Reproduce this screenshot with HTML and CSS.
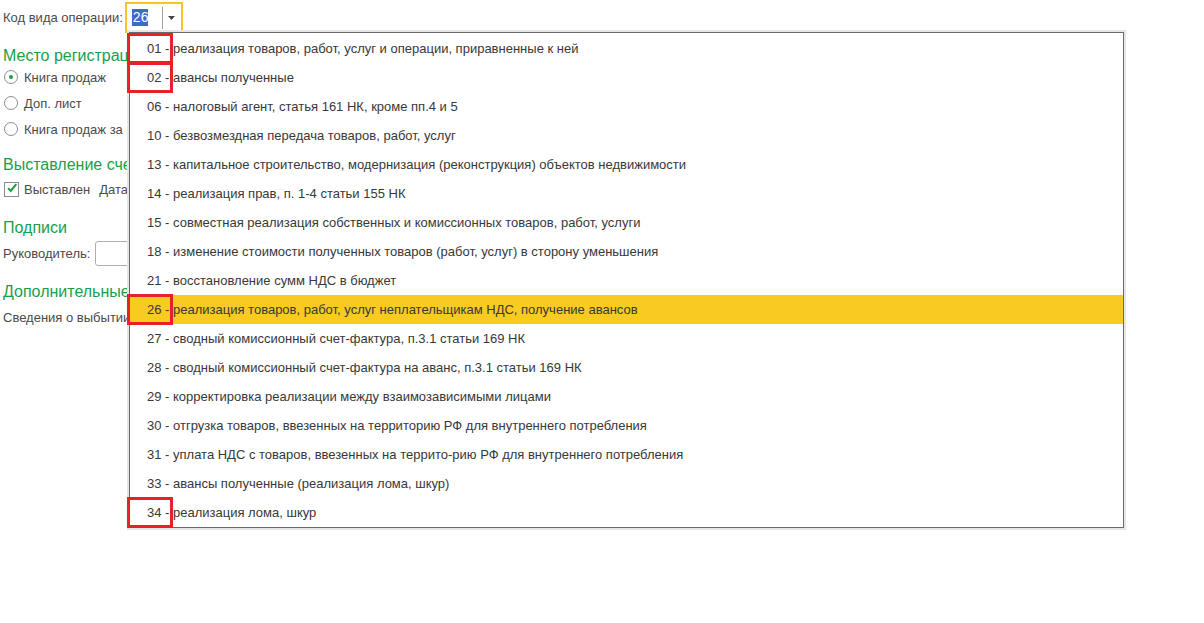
FILE: index.html
```html
<!DOCTYPE html>
<html lang="ru">
<head>
<meta charset="utf-8">
<title>Счет-фактура выданный</title>
<link rel="stylesheet" href="styles.css">
</head>
<body>
<div class="form">
  <div class="row-top">
    <span class="label">Код вида операции:</span>
    <div class="combo">
      <span class="combo-value"><span class="sel">26</span></span>
      <span class="combo-sep"></span>
      <span class="combo-btn"><svg width="7" height="4" viewBox="0 0 7 4"><path d="M0 0h7L3.5 4z" fill="#444"/></svg></span>
    </div>
  </div>

  <div class="group-title">Место регистрации</div>
  <div class="line"><span class="radio on"></span><span>Книга продаж</span></div>
  <div class="line"><span class="radio"></span><span>Доп. лист</span></div>
  <div class="line"><span class="radio"></span><span>Книга продаж за истекший налоговый период</span></div>

  <div class="group-title gt2">Выставление счета-фактуры</div>
  <div class="line line-check">
    <span class="check"><svg width="14" height="14" viewBox="0 0 14 14"><path d="M2.5 7.2l3 3.3 6.5-8" fill="none" stroke="#1d9b45" stroke-width="2.4"/></svg></span>
    <span>Выставлен</span><span class="gap">Дата выставления:</span>
  </div>

  <div class="group-title gt3">Подписи</div>
  <div class="line line-input"><span>Руководитель:</span><span class="input"></span></div>

  <div class="group-title gt3">Дополнительные сведения</div>
  <div class="line line-last"><span>Сведения о выбытии</span></div>
</div>

<div class="popup">
  <div class="item"><span class="mark"></span>01 - реализация товаров, работ, услуг и операции, приравненные к ней</div>
  <div class="item"><span class="mark"></span>02 - авансы полученные</div>
  <div class="item">06 - налоговый агент, статья 161 НК, кроме пп.4 и 5</div>
  <div class="item">10 - безвозмездная передача товаров, работ, услуг</div>
  <div class="item">13 - капитальное строительство, модернизация (реконструкция) объектов недвижимости</div>
  <div class="item">14 - реализация прав, п. 1-4 статьи 155 НК</div>
  <div class="item">15 - совместная реализация собственных и комиссионных товаров, работ, услуги</div>
  <div class="item">18 - изменение стоимости полученных товаров (работ, услуг) в сторону уменьшения</div>
  <div class="item">21 - восстановление сумм НДС в бюджет</div>
  <div class="item current"><span class="mark"></span>26 - реализация товаров, работ, услуг неплательщикам НДС, получение авансов</div>
  <div class="item">27 - сводный комиссионный счет-фактура, п.3.1 статьи 169 НК</div>
  <div class="item">28 - сводный комиссионный счет-фактура на аванс, п.3.1 статьи 169 НК</div>
  <div class="item">29 - корректировка реализации между взаимозависимыми лицами</div>
  <div class="item">30 - отгрузка товаров, ввезенных на территорию РФ для внутреннего потребления</div>
  <div class="item">31 - уплата НДС с товаров, ввезенных на террито-рию РФ для внутреннего потребления</div>
  <div class="item">33 - авансы полученные (реализация лома, шкур)</div>
  <div class="item"><span class="mark"></span>34 - реализация лома, шкур</div>
</div>
</body>
</html>
```

FILE: styles.css
```css
html, body {
  margin: 0;
  padding: 0;
  background: #fff;
}

body {
  font-family: "Liberation Sans", Arial, sans-serif;
  font-size: 13px;
  color: #4a4a4a;
  width: 1204px;
  height: 623px;
  overflow: hidden;
  position: relative;
}

/* ---------- form ---------- */
.form {
  display: flex;
  flex-direction: column;
  padding-left: 3px;
  white-space: nowrap;
}

.row-top {
  display: flex;
  align-items: center;
  margin-top: 2px;
  height: 31px;
}

.label {
  margin-right: 2px;
}

.combo {
  box-sizing: border-box;
  width: 58px;
  height: 31px;
  border: 2px solid #f5c523;
  display: flex;
  align-items: center;
}

.combo-value {
  width: 30px;
  padding-left: 5px;
  display: flex;
  align-items: center;
}

.sel {
  background: #3c6cc8;
  color: #fff;
  font-size: 14px;
  line-height: 17px;
  padding: 0 0 0 1px;
}

.combo-sep {
  width: 1px;
  height: 22px;
  background: #a0a0a0;
}

.combo-btn {
  flex: 1;
  display: flex;
  justify-content: center;
  align-items: center;
  padding-top: 1px;
}

.combo-btn svg { display: block; }

.group-title {
  margin-top: 15px;
  height: 16px;
  line-height: 16px;
  font-size: 16px;
  color: #17a04a;
}

.gt2 { margin-top: 15px; }
.gt3 { margin-top: 18px; }

.line {
  display: flex;
  align-items: center;
  height: 26px;
}

.radio {
  box-sizing: border-box;
  flex: none;
  width: 14px;
  height: 14px;
  border: 1px solid #8e8e8e;
  border-radius: 50%;
  margin: 0 6px 0 1px;
  display: flex;
  align-items: center;
  justify-content: center;
}

.radio.on::after {
  content: "";
  width: 4px;
  height: 4px;
  border-radius: 50%;
  background: #1d9b45;
}

.line-check { margin-top: 3px; }

.check {
  box-sizing: border-box;
  flex: none;
  width: 15px;
  height: 15px;
  border: 1px solid #8e8e8e;
  margin: 0 5px 0 1px;
  display: flex;
  align-items: center;
  justify-content: center;
  overflow: visible;
}

.check svg { display: block; margin-top: -2px; margin-left: 1px; }

.gap { margin-left: 9px; }

.line-input { margin-top: 4px; }

.input {
  box-sizing: border-box;
  flex: none;
  width: 120px;
  height: 25px;
  border: 1px solid #b0b0b0;
  border-radius: 3px;
  margin-left: 5px;
}

.line-last { margin-top: 4px; }

/* ---------- dropdown list, drawn over the form ---------- */
.popup {
  position: absolute;
  left: 129px;
  top: 32px;
  width: 993px;
  border: 1px solid #6a6a6a;
  padding-top: 1px;
  background: #fff;
  box-shadow: 0 0 0 2px #e6e6e6;
}

.item {
  position: relative;
  height: 29px;
  line-height: 29px;
  padding-left: 17px;
  color: #383838;
  white-space: nowrap;
}

.item.current {
  background: #f8ca22;
}

/* red frame around the code of an item */
.mark {
  position: absolute;
  left: -3px;
  top: -1px;
  width: 46px;
  height: 31px;
  box-sizing: border-box;
  border: 3px solid #e8202a;
}
```
